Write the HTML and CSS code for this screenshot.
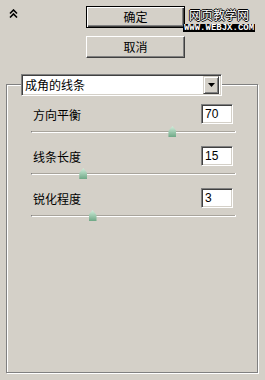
FILE: index.html
```html
<!DOCTYPE html>
<html lang="zh-CN">
<head>
    <meta charset="UTF-8">
    <meta name="viewport" content="width=device-width, initial-scale=1.0">
    <title>成角的线条</title>
    <link rel="stylesheet" href="styles.css">
</head>
<body>
    <div class="panel">
        <div class="top">
            <div class="collapse">
                <svg width="9" height="9" viewBox="0 0 9 9">
                    <path d="M1 4.5 L4.5 1 L8 4.5 M1 8.5 L4.5 5 L8 8.5" fill="none" stroke="#000" stroke-width="1.6"/>
                </svg>
            </div>
            <div class="buttons">
                <button class="btn btn-default">确定</button>
                <button class="btn">取消</button>
            </div>
        </div>

        <div class="group">
            <div class="select">
                <span class="select-text">成角的线条</span>
                <span class="select-arrow">
                    <svg width="7" height="4" viewBox="0 0 7 4"><path d="M0 0 H7 L3.5 4 Z" fill="#000"/></svg>
                </span>
            </div>

            <div class="param">
                <div class="param-head">
                    <span class="param-label">方向平衡</span>
                    <span class="field">70</span>
                </div>
                <div class="slider">
                    <div class="track"></div>
                    <span class="thumb" style="left: 69%"></span>
                </div>
            </div>

            <div class="param">
                <div class="param-head">
                    <span class="param-label">线条长度</span>
                    <span class="field">15</span>
                </div>
                <div class="slider">
                    <div class="track"></div>
                    <span class="thumb" style="left: 25.5%"></span>
                </div>
            </div>

            <div class="param">
                <div class="param-head">
                    <span class="param-label">锐化程度</span>
                    <span class="field">3</span>
                </div>
                <div class="slider">
                    <div class="track"></div>
                    <span class="thumb" style="left: 30%"></span>
                </div>
            </div>
        </div>

        <div class="stamp">
            <div class="stamp-name">网页教学网</div>
            <div class="stamp-url">WWW.WEBJX.COM</div>
        </div>
    </div>
</body>
</html>
```

FILE: styles.css
```css
body {
    margin: 0;
    padding: 0;
    background-color: #d4d0c8;
    font-family: "Noto Sans CJK SC", "Liberation Sans", sans-serif;
    font-size: 12px;
    color: #000;
}

.panel {
    position: relative;
    width: 265px;
    height: 380px;
    padding-top: 6px;
    box-sizing: border-box;
}

.top {
    display: flex;
}

.collapse {
    width: 86px;
    padding: 3px 0 0 9px;
    box-sizing: border-box;
}

.collapse svg {
    display: block;
}

.buttons {
    display: flex;
    flex-direction: column;
    gap: 8px;
    width: 99px;
}

.btn {
    height: 22px;
    padding: 0;
    font-family: "Noto Sans CJK SC", sans-serif;
    font-size: 12px;
    color: #000;
    background-color: #d4d0c8;
    border: 1px solid;
    border-color: #fff #404040 #404040 #fff;
    box-shadow: inset -1px -1px 0 #808080;
    line-height: 18px;
}

.btn-default {
    border-color: #000;
    box-shadow: inset 1px 1px 0 #fff, inset -1px -1px 0 #404040, inset -2px -2px 0 #808080;
}

.group {
    margin: 26px 0 0 6px;
    width: 252px;
    height: 289px;
    box-sizing: border-box;
    border: 1px solid #808080;
    box-shadow: inset 1px 1px 0 #fff, 1px 1px 0 #fff;
}

.select {
    display: flex;
    align-items: center;
    justify-content: space-between;
    margin: -11px 0 0 14px;
    width: 201px;
    height: 22px;
    box-sizing: border-box;
    background-color: #fff;
    border: 1px solid;
    border-color: #808080 #fff #fff #808080;
    box-shadow: inset 1px 1px 0 #404040, inset -1px -1px 0 #d4d0c8;
    padding: 2px 2px 2px 3px;
}

.select-text {
    line-height: 16px;
}

.select-arrow {
    display: flex;
    align-items: center;
    justify-content: center;
    width: 16px;
    height: 18px;
    box-sizing: border-box;
    background-color: #d4d0c8;
    border: 1px solid;
    border-color: #d4d0c8 #404040 #404040 #d4d0c8;
    box-shadow: inset 1px 1px 0 #fff, inset -1px -1px 0 #808080;
}

.select-arrow svg {
    display: block;
}

.group .select + .param {
    margin-top: 8px;
}

.param {
    margin-left: 24px;
    width: 205px;
}

.param-head {
    display: flex;
    align-items: center;
    justify-content: space-between;
    height: 20px;
    padding: 0 3px 0 2px;
}

.field {
    width: 32px;
    height: 20px;
    box-sizing: border-box;
    background-color: #fff;
    border: 1px solid;
    border-color: #808080 #fff #fff #808080;
    box-shadow: inset 1px 1px 0 #404040, inset -1px -1px 0 #d4d0c8;
    padding: 0 0 0 3px;
    font-family: "Liberation Sans", sans-serif;
    font-size: 12px;
    line-height: 18px;
}

.slider {
    position: relative;
    height: 22px;
}

.track {
    position: relative;
    top: 7px;
    height: 1px;
    background-color: #a8a49c;
    border-bottom: 1px solid #fff;
    border-left: 1px solid #808080;
    border-right: 1px solid #fff;
}

.thumb {
    position: absolute;
    top: 2px;
    width: 8px;
    height: 11px;
    margin-left: -4px;
    clip-path: polygon(50% 0, 100% 45%, 100% 100%, 0 100%, 0 45%);
    background-image: linear-gradient(#d2eedc, #6ea886);
}

.stamp {
    position: absolute;
    left: 183px;
    top: 8px;
    width: 72px;
    text-align: center;
}

.stamp-name {
    font-size: 12px;
    line-height: 14px;
    height: 14px;
    color: #fff;
    text-shadow: 1px 0 0 #000, -1px 0 0 #000, 0 1px 0 #000, 0 -1px 0 #000;
}

.stamp-url {
    margin-top: 2px;
    background-color: #000;
    color: #fff;
    font-family: "Liberation Mono", monospace;
    font-size: 9px;
    font-weight: bold;
    line-height: 8px;
    height: 8px;
    overflow: hidden;
}
```
